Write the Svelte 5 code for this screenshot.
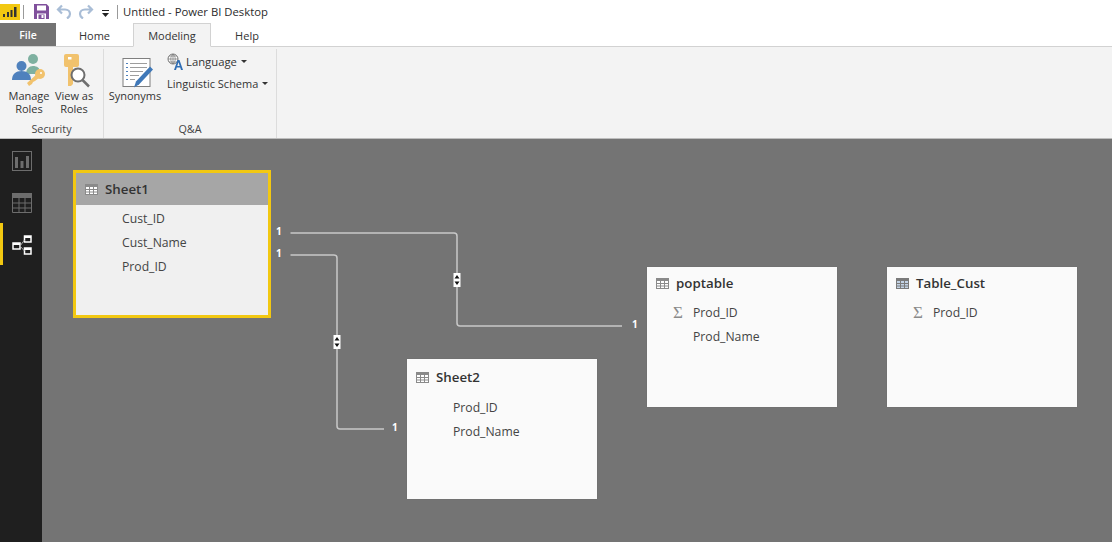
<script>
  const tables = [
    { name: 'Sheet1', x: 73, y: 170, h: 148, sel: true, cols: [{ n: 'Cust_ID' }, { n: 'Cust_Name' }, { n: 'Prod_ID' }] },
    { name: 'Sheet2', x: 407, y: 359, h: 140, low: true, cols: [{ n: 'Prod_ID' }, { n: 'Prod_Name' }] },
    { name: 'poptable', x: 647, y: 267, h: 140, cols: [{ n: 'Prod_ID', sum: true }, { n: 'Prod_Name' }] },
    { name: 'Table_Cust', x: 887, y: 267, h: 140, cols: [{ n: 'Prod_ID', sum: true }] }
  ];
  const ones = [
    { x: 276, y: 224 },
    { x: 276, y: 246 },
    { x: 632, y: 317 },
    { x: 392, y: 420 }
  ];
</script>

<div class="app">
  <div class="titlebar">
    <svg class="logo" width="20" height="16" viewBox="0 0 20 16">
      <rect width="20" height="16" fill="#f2c811" />
      <path d="M3 10h2v3H3zM7 8h2v5H7zM10.500 6h2v7h-2zM14 3h2.500v10H14z" fill="#333" />
    </svg>
    <span class="qsep"></span>
    <svg width="15" height="15" viewBox="0 0 15 15">
      <path d="M0 0h12.500L15 2.500V15H0z" fill="#80509c" />
      <rect x="3" y="1.500" width="9" height="5" fill="#fff" />
      <rect x="3" y="9.500" width="9" height="5.500" fill="#fff" />
      <rect x="4.500" y="10.500" width="6" height="4.500" fill="#80509c" />
      <rect x="7.500" y="11" width="2" height="3" fill="#fff" />
    </svg>
    <svg class="undo" width="16" height="15" viewBox="0 0 16 15">
      <path d="M6 1.500L2 5.500l4 4M2.500 5.500H9c3 0 5 2 5 4.500s-1.500 3.500-3 4.500" fill="none" stroke="#a9bdd6" stroke-width="2.200" />
    </svg>
    <svg class="redo" width="16" height="15" viewBox="0 0 16 15">
      <path d="M10 1.500l4 4-4 4M13.500 5.500H7c-3 0-5 2-5 4.500s1.500 3.500 3 4.500" fill="none" stroke="#a9bdd6" stroke-width="2.200" />
    </svg>
    <svg class="more" width="7" height="7" viewBox="0 0 7 7">
      <path d="M0 0h7v1H0zM0 3h7L3.500 7z" fill="#222" />
    </svg>
    <span class="qsep second"></span>
    <span class="title">Untitled - Power BI Desktop</span>
  </div>

  <div class="tabs">
    <div class="tab file">File</div>
    <div class="tab home">Home</div>
    <div class="tab active">Modeling</div>
    <div class="tab help">Help</div>
  </div>

  <div class="ribbon">
    <section class="group security">
      <div class="items">
        <div class="big manage">
          <svg width="34" height="34" viewBox="0 0 34 34">
            <circle cx="21" cy="6" r="5" fill="#7eb0a0" />
            <path d="M14 21c0-5 3-8 7-8s7 2 7 6v2z" fill="#7eb0a0" />
            <circle cx="9.500" cy="13" r="5" fill="#4f81bd" />
            <path d="M0 27c0-6 4-9 9.500-9s9.500 3 9.500 9z" fill="#4f81bd" />
            <circle cx="28" cy="21" r="5" fill="#f1c26d" />
            <path d="M25 21l-10 9 2 3 3-2 1-2 2-1 4-3z" fill="#f1c26d" />
            <circle cx="29" cy="20" r="1" fill="#fff" />
          </svg>
          <span>Manage<br />Roles</span>
        </div>
        <div class="big viewas">
          <svg width="28" height="34" viewBox="0 0 28 34">
            <rect x="1" y="0" width="15" height="13" rx="2" fill="#f1c26d" />
            <rect x="5" y="3" width="3.500" height="2.500" fill="#fff" />
            <path d="M5 13h5v17l-2 2H5z" fill="#f1c26d" />
            <circle cx="15" cy="21" r="6.500" fill="#fff" stroke="#6e6e6e" stroke-width="2" />
            <path d="M19.500 26l6.500 6.500" stroke="#6e6e6e" stroke-width="2.500" />
          </svg>
          <span>View as<br />Roles</span>
        </div>
      </div>
      <div class="glabel">Security</div>
    </section>

    <section class="group qa">
      <div class="items">
        <div class="big syn">
          <svg width="32" height="33" viewBox="0 0 32 33">
            <rect x="1" y="1" width="27" height="28" fill="#fff" stroke="#7f7f7f" />
            <path d="M4 6h2M4 10h2M4 14h2M4 18h2M4 22h2" stroke="#4f81bd" />
            <path d="M8 6h17M8 10h17M8 14h13M8 18h9M8 22h5" stroke="#9d9d9d" />
            <path d="M28 9l3 3-14 15-5 3 2-6z" fill="#3f78b8" />
          </svg>
          <span>Synonyms</span>
        </div>
        <div class="small-btns">
          <div class="small lang">
            <svg width="18" height="17" viewBox="0 0 18 17">
              <circle cx="6" cy="6" r="5" fill="#fff" stroke="#777" />
              <path d="M1 6h10M6 1v10M2 3h8M2 9h8M6 1c-3 3-3 7 0 10M6 1c3 3 3 7 0 10" fill="none" stroke="#777" stroke-width="0.700" />
              <path d="M7 17l3.500-10h2L16 17h-2l-.8-2.500h-3.400L9 17zM10.300 13h2.400l-1.200-3.800z" fill="#2f6db3" />
            </svg>
            <span>Language</span><i class="caret"></i>
          </div>
          <div class="small ling"><span>Linguistic Schema</span><i class="caret"></i></div>
        </div>
      </div>
      <div class="glabel">Q&amp;A</div>
    </section>
  </div>

  <div class="main">
    <nav class="side">
      <div class="navitem">
        <svg width="20" height="20" viewBox="0 0 20 20">
          <rect x="0.500" y="0.500" width="19" height="19" fill="none" stroke="#6d6d6d" />
          <path d="M3 6h3v11H3zM8.500 10h3v7h-3zM14 5h3v12h-3z" fill="#6d6d6d" />
        </svg>
      </div>
      <div class="navitem">
        <svg width="20" height="20" viewBox="0 0 20 20">
          <rect x="0" y="0" width="20" height="5" fill="#6d6d6d" />
          <path d="M.5 5v14.500h19V5M.5 10h19M.5 15h19M7 5v14M13 5v14" fill="none" stroke="#6d6d6d" />
        </svg>
      </div>
      <div class="navitem current">
        <svg width="20" height="20" viewBox="0 0 20 20">
          <path d="M1 8h7v6H1zM12.500 1h6.500v6h-6.500zM12.500 13h6.500v6h-6.500z" fill="#1f1f1f" stroke="#fff" stroke-width="1.500" />
          <path d="M1 8h7v2H1zM12.500 1h6.500v2h-6.500zM12.500 13h6.500v2h-6.500z" fill="#fff" />
          <path d="M8 11l4.500-6M8 11l4.500 5" stroke="#aaa" fill="none" />
        </svg>
      </div>
    </nav>

    <div class="canvas">
      <svg class="links" width="1112" height="542" viewBox="0 0 1112 542">
        <path d="M290.500 233H454q3 0 3 3v87q0 3 3 3h162" />
        <path d="M290.500 255H334q3 0 3 3v168q0 3 3 3h44" />
        <rect class="mark" x="453.500" y="273" width="7" height="14" />
        <path class="arrow" d="M457 275l2.500 3.500h-5zM457 285l2.500-3.500h-5z" />
        <rect class="mark" x="333.500" y="335" width="7" height="14" />
        <path class="arrow" d="M337 337l2.500 3.500h-5zM337 347l2.500-3.500h-5z" />
      </svg>

      {#each ones as o}
        <span class="one" style="left:{o.x}px;top:{o.y}px">1</span>
      {/each}

      {#each tables as t}
        <div class="table" class:sel={t.sel} class:low={t.low} style="left:{t.x}px;top:{t.y}px;height:{t.h}px">
          <div class="thead">
            <svg width="13" height="11" viewBox="0 0 13 11">
              <rect width="13" height="11" fill={t.name === 'Table_Cust' ? '#7a7a7a' : '#8a8a8a'} />
              <path d="M1 3h3v2H1zM5 3h3v2H5zM9 3h3v2H9zM1 6h3v1.500H1zM5 6h3v1.500H5zM9 6h3v1.500H9zM1 8.500h3V10H1zM5 8.500h3V10H5zM9 8.500h3V10H9z" fill={t.name === 'Table_Cust' ? '#c3d3e6' : '#fff'} />
            </svg>
            <span>{t.name}</span>
          </div>
          <ul>
            {#each t.cols as c}
              <li>
                {#if c.sum}<i class="sigma">Σ</i>{/if}
                {c.n}
              </li>
            {/each}
          </ul>
        </div>
      {/each}
    </div>
  </div>
</div>

<style>
  :global(body) {
    margin: 0;
    background: #fff;
  }
  .app {
    width: 1112px;
    height: 542px;
    display: flex;
    flex-direction: column;
    overflow: hidden;
    font-family: "Open Sans", "Noto Sans", sans-serif;
    font-size: 11px;
    color: #333;
  }
  .titlebar {
    height: 23px;
    display: flex;
    align-items: center;
    flex: none;
  }
  .logo {
    margin-right: 3px;
  }
  .qsep {
    width: 1px;
    height: 14px;
    background: #9a9a9a;
    margin: 0 10px 0 0;
  }
  .qsep.second {
    margin: 0 5px 0 8px;
  }
  .undo {
    margin-left: 7px;
  }
  .redo {
    margin-left: 6px;
  }
  .more {
    margin-left: 8px;
    margin-top: 4px;
  }
  .title {
    font-size: 11.300px;
    color: #2b2b2b;
  }
  .tabs {
    height: 24px;
    flex: none;
    display: flex;
    border-bottom: 1px solid #d2d2d2;
    box-sizing: border-box;
  }
  .tab {
    height: 24px;
    box-sizing: border-box;
    display: flex;
    align-items: center;
    justify-content: center;
    font-size: 11px;
  }
  .file {
    width: 56px;
    background: #737373;
    color: #fff;
    height: 23px;
    font-size: 10.500px;
    font-weight: 600;
  }
  .home {
    width: 77px;
  }
  .active {
    width: 78px;
    border: 1px solid #d2d2d2;
    border-bottom: 1px solid #f3f3f3;
    background: #f3f3f3;
  }
  .help {
    width: 72px;
  }
  .ribbon {
    height: 92px;
    flex: none;
    box-sizing: border-box;
    background: #f3f3f3;
    border-bottom: 1px solid #bdbdbd;
    display: flex;
  }
  .group {
    display: flex;
    flex-direction: column;
    margin: 2px 0 0;
    border-right: 1px solid #dcdcdc;
    box-sizing: border-box;
  }
  .security {
    width: 104px;
  }
  .qa {
    width: 173px;
  }
  .items {
    display: flex;
    flex: 1;
  }
  .glabel {
    text-align: center;
    height: 17px;
    line-height: 15px;
    font-size: 10.800px;
    color: #444;
  }
  .big {
    display: flex;
    flex-direction: column;
    align-items: center;
    text-align: center;
    font-size: 11px;
    line-height: 13px;
    white-space: nowrap;
  }
  .big svg {
    height: 34px;
    margin-top: 4px;
    margin-bottom: 2px;
  }
  .manage {
    width: 50px;
    margin-left: 4px;
  }
  .viewas {
    width: 40px;
  }
  .viewas svg {
    margin-left: 5px;
    margin-top: 5px;
    margin-bottom: 1px;
  }
  .syn {
    width: 56px;
    margin-left: 3px;
  }
  .syn svg {
    margin-left: 5px;
    margin-top: 8px;
    margin-bottom: -2px;
  }
  .small-btns {
    display: flex;
    flex-direction: column;
    margin-left: 4px;
    margin-top: 1px;
    font-size: 11px;
  }
  .small {
    height: 22px;
    display: flex;
    align-items: center;
    white-space: nowrap;
  }
  .lang {
    font-size: 11.300px;
  }
  .lang svg {
    margin-right: 1px;
  }
  .caret {
    width: 0;
    height: 0;
    margin-left: 4px;
    border: 3px solid transparent;
    border-top-color: #333;
    border-bottom: 0;
  }
  .main {
    flex: 1;
    display: flex;
    min-height: 0;
    position: relative;
  }
  .side {
    width: 42px;
    flex: none;
    background: #1f1f1f;
    display: flex;
    flex-direction: column;
    box-sizing: border-box;
  }
  .navitem {
    height: 42px;
    display: flex;
    align-items: center;
    padding-left: 12px;
  }
  .navitem svg {
    margin-top: 2px;
  }
  .current {
    border-left: 3px solid #f2c811;
    padding-left: 9px;
  }
  .canvas {
    flex: 1;
    background: #747474;
  }
  .links {
    position: absolute;
    left: 0;
    top: -139px;
  }
  .links path {
    fill: none;
    stroke: #c8c8c8;
    stroke-width: 1.500;
  }
  .links .mark {
    fill: #fff;
  }
  .links .arrow {
    fill: #111;
    stroke: none;
  }
  .one {
    position: absolute;
    margin-top: -139px;
    font-size: 10px;
    font-weight: 700;
    color: #fff;
    line-height: 14px;
  }
  .table {
    position: absolute;
    margin-top: -139px;
    width: 190px;
    box-sizing: border-box;
    background: #fafafa;
    color: #444;
    box-shadow: 0 0 1px #666;
  }
  .table.sel {
    width: 198px;
    border: 3px solid #f2c811;
    background: #f0f0f0;
    box-shadow: none;
  }
  .thead {
    height: 32px;
    display: flex;
    align-items: center;
    padding-left: 9px;
    gap: 7px;
    font-size: 13.300px;
    font-weight: 600;
    color: #333;
  }
  .sel .thead {
    background: #a6a6a6;
  }
  .low .thead {
    padding-top: 2px;
  }
  ul {
    list-style: none;
    margin: 0;
    padding: 2px 0 0 46px;
  }
  .low ul {
    padding-top: 3px;
  }
  li {
    height: 24px;
    line-height: 24px;
    font-size: 12.200px;
    position: relative;
  }
  .sigma {
    position: absolute;
    left: -20px;
    top: 0;
    font-style: normal;
    font-family: "Liberation Serif", serif;
    font-size: 17px;
    color: #8a8a8a;
  }
</style>
